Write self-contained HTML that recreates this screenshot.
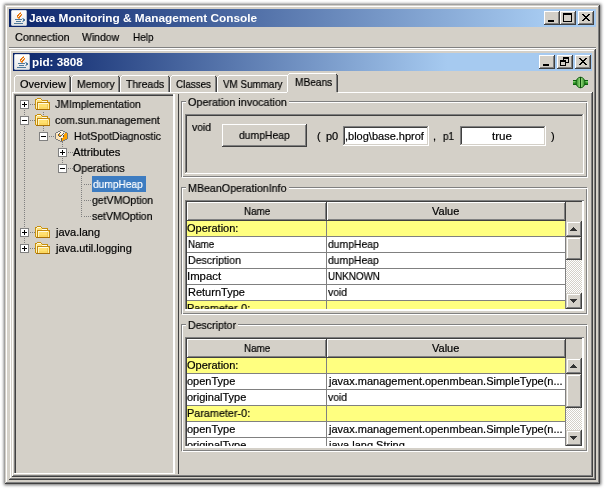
<!DOCTYPE html>
<html><head><meta charset="utf-8"><style>
html,body{margin:0;padding:0}
body{width:605px;height:489px;position:relative;overflow:hidden;background:#fff;font-family:"Liberation Sans",sans-serif;font-size:11px}
div,svg{position:absolute;box-sizing:border-box}
.t{white-space:pre;line-height:13px;color:#000;will-change:transform;-webkit-text-stroke:0.2px currentColor}
</style></head><body>
<div style="left:5px;top:5px;width:595px;height:479px;background:#d4d0c8;box-shadow:0 0 3px 1px rgba(0,0,0,0.6)"></div>
<div style="left:5px;top:5px;width:595px;height:479px;box-shadow:inset -1px -1px #404040,inset 1px 1px #d4d0c8,inset -2px -2px #808080,inset 2px 2px #ffffff;"></div>
<div style="left:9px;top:9px;width:587px;height:18px;background:linear-gradient(to right,#0a246a 0px,#a6caf0 535px);"></div>
<svg style="left:11px;top:10px" width="16" height="16" viewBox="0 0 16 16" shape-rendering="crispEdges">
<defs><linearGradient id="jg11" x1="0" y1="0" x2="0" y2="1"><stop offset="0" stop-color="#ffffff"/><stop offset="1" stop-color="#e6e6e6"/></linearGradient></defs>
<rect x="0" y="0" width="16" height="16" fill="#9aa8c0" opacity="0.6"/>
<rect x="1" y="0" width="14" height="16" fill="url(#jg11)"/>
<rect x="0" y="1" width="16" height="14" fill="url(#jg11)"/>
<rect x="0" y="1" width="1" height="14" fill="#c8d0dc"/><rect x="15" y="1" width="1" height="14" fill="#b8c2d0"/>
<rect x="1" y="0" width="14" height="1" fill="#d8dee6"/><rect x="1" y="15" width="14" height="1" fill="#b8c2d0"/>
<rect x="9" y="2" width="1" height="1" fill="#f4a860"/><rect x="8" y="3" width="1" height="1" fill="#e8760a"/><rect x="9" y="3" width="1" height="1" fill="#e8760a"/><rect x="7" y="4" width="1" height="1" fill="#e8760a"/><rect x="8" y="4" width="1" height="1" fill="#f4a860"/><rect x="10" y="4" width="1" height="1" fill="#e8760a"/><rect x="6" y="5" width="1" height="1" fill="#e8760a"/><rect x="7" y="5" width="1" height="1" fill="#e8760a"/><rect x="9" y="5" width="1" height="1" fill="#e8760a"/><rect x="10" y="5" width="1" height="1" fill="#f4a860"/><rect x="6" y="6" width="1" height="1" fill="#e8760a"/><rect x="8" y="6" width="1" height="1" fill="#e8760a"/><rect x="9" y="6" width="1" height="1" fill="#e8760a"/><rect x="6" y="7" width="1" height="1" fill="#f4a860"/><rect x="7" y="7" width="1" height="1" fill="#e8760a"/><rect x="8" y="7" width="1" height="1" fill="#e8760a"/><rect x="7" y="8" width="1" height="1" fill="#f4a860"/><rect x="8" y="8" width="1" height="1" fill="#f4a860"/><rect x="4" y="9" width="7" height="1" fill="#4f7a9c"/><rect x="11" y="8" width="2" height="1" fill="#8fb0c8"/><rect x="12" y="9" width="2" height="2" fill="#4f7a9c"/><rect x="11" y="11" width="2" height="1" fill="#8fb0c8"/><rect x="5" y="11" width="5" height="1" fill="#4f7a9c"/><rect x="3" y="13" width="9" height="1" fill="#4f7a9c"/>
</svg>
<div class="t" style="left:29.00px;top:12px;transform:scaleX(1.0758);transform-origin:0 0;font-weight:bold;-webkit-text-stroke:0;color:#fff">Java Monitoring &amp; Management Console</div>
<div style="left:544px;top:11px;width:16px;height:14px;background:#d4d0c8;box-shadow:inset -1px -1px #404040,inset 1px 1px #ffffff,inset -2px -2px #808080,inset 2px 2px #d4d0c8;"></div>
<div style="left:548px;top:20px;width:6px;height:2px;background:#000;"></div>
<div style="left:560px;top:11px;width:16px;height:14px;background:#d4d0c8;box-shadow:inset -1px -1px #404040,inset 1px 1px #ffffff,inset -2px -2px #808080,inset 2px 2px #d4d0c8;"></div>
<div style="left:563px;top:13px;width:9px;height:9px;background:transparent;box-shadow:inset 0 2px #000,inset 1px 0 #000,inset -1px 0 #000,inset 0 -1px #000"></div>
<div style="left:578px;top:11px;width:16px;height:14px;background:#d4d0c8;box-shadow:inset -1px -1px #404040,inset 1px 1px #ffffff,inset -2px -2px #808080,inset 2px 2px #d4d0c8;"></div>
<svg style="left:582px;top:14px" width="8" height="7" shape-rendering="crispEdges"><rect x="0" y="0" width="1" height="1"/><rect x="1" y="0" width="1" height="1"/><rect x="6" y="0" width="1" height="1"/><rect x="7" y="0" width="1" height="1"/><rect x="1" y="1" width="1" height="1"/><rect x="2" y="1" width="1" height="1"/><rect x="5" y="1" width="1" height="1"/><rect x="6" y="1" width="1" height="1"/><rect x="2" y="2" width="1" height="1"/><rect x="3" y="2" width="1" height="1"/><rect x="4" y="2" width="1" height="1"/><rect x="5" y="2" width="1" height="1"/><rect x="3" y="3" width="1" height="1"/><rect x="4" y="3" width="1" height="1"/><rect x="2" y="4" width="1" height="1"/><rect x="3" y="4" width="1" height="1"/><rect x="4" y="4" width="1" height="1"/><rect x="5" y="4" width="1" height="1"/><rect x="1" y="5" width="1" height="1"/><rect x="2" y="5" width="1" height="1"/><rect x="5" y="5" width="1" height="1"/><rect x="6" y="5" width="1" height="1"/><rect x="0" y="6" width="1" height="1"/><rect x="1" y="6" width="1" height="1"/><rect x="6" y="6" width="1" height="1"/><rect x="7" y="6" width="1" height="1"/></svg>
<div class="t" style="left:15.00px;top:31px;transform:scaleX(0.9815);transform-origin:0 0;">Connection</div>
<div class="t" style="left:82.00px;top:31px;transform:scaleX(0.9487);transform-origin:0 0;">Window</div>
<div class="t" style="left:133.00px;top:31px;transform:scaleX(0.9091);transform-origin:0 0;">Help</div>
<div style="left:9px;top:47px;width:587px;height:1px;background:#808080;"></div>
<div style="left:9px;top:48px;width:587px;height:1px;background:#ffffff;"></div>
<div style="left:9px;top:49px;width:587px;height:431px;box-shadow:inset -1px -1px #404040,inset 1px 1px #d4d0c8,inset -2px -2px #808080,inset 2px 2px #ffffff;"></div>
<div style="left:13px;top:53px;width:579px;height:18px;background:linear-gradient(to right,#0a246a 0px,#a6caf0 434px);"></div>
<svg style="left:14px;top:54px" width="16" height="16" viewBox="0 0 16 16" shape-rendering="crispEdges">
<defs><linearGradient id="jg14" x1="0" y1="0" x2="0" y2="1"><stop offset="0" stop-color="#ffffff"/><stop offset="1" stop-color="#e6e6e6"/></linearGradient></defs>
<rect x="0" y="0" width="16" height="16" fill="#9aa8c0" opacity="0.6"/>
<rect x="1" y="0" width="14" height="16" fill="url(#jg14)"/>
<rect x="0" y="1" width="16" height="14" fill="url(#jg14)"/>
<rect x="0" y="1" width="1" height="14" fill="#c8d0dc"/><rect x="15" y="1" width="1" height="14" fill="#b8c2d0"/>
<rect x="1" y="0" width="14" height="1" fill="#d8dee6"/><rect x="1" y="15" width="14" height="1" fill="#b8c2d0"/>
<rect x="9" y="2" width="1" height="1" fill="#f4a860"/><rect x="8" y="3" width="1" height="1" fill="#e8760a"/><rect x="9" y="3" width="1" height="1" fill="#e8760a"/><rect x="7" y="4" width="1" height="1" fill="#e8760a"/><rect x="8" y="4" width="1" height="1" fill="#f4a860"/><rect x="10" y="4" width="1" height="1" fill="#e8760a"/><rect x="6" y="5" width="1" height="1" fill="#e8760a"/><rect x="7" y="5" width="1" height="1" fill="#e8760a"/><rect x="9" y="5" width="1" height="1" fill="#e8760a"/><rect x="10" y="5" width="1" height="1" fill="#f4a860"/><rect x="6" y="6" width="1" height="1" fill="#e8760a"/><rect x="8" y="6" width="1" height="1" fill="#e8760a"/><rect x="9" y="6" width="1" height="1" fill="#e8760a"/><rect x="6" y="7" width="1" height="1" fill="#f4a860"/><rect x="7" y="7" width="1" height="1" fill="#e8760a"/><rect x="8" y="7" width="1" height="1" fill="#e8760a"/><rect x="7" y="8" width="1" height="1" fill="#f4a860"/><rect x="8" y="8" width="1" height="1" fill="#f4a860"/><rect x="4" y="9" width="7" height="1" fill="#4f7a9c"/><rect x="11" y="8" width="2" height="1" fill="#8fb0c8"/><rect x="12" y="9" width="2" height="2" fill="#4f7a9c"/><rect x="11" y="11" width="2" height="1" fill="#8fb0c8"/><rect x="5" y="11" width="5" height="1" fill="#4f7a9c"/><rect x="3" y="13" width="9" height="1" fill="#4f7a9c"/>
</svg>
<div class="t" style="left:32.00px;top:56px;transform:scaleX(1.0638);transform-origin:0 0;font-weight:bold;-webkit-text-stroke:0;color:#fff">pid: 3808</div>
<div style="left:539px;top:55px;width:16px;height:14px;background:#d4d0c8;box-shadow:inset -1px -1px #404040,inset 1px 1px #ffffff,inset -2px -2px #808080,inset 2px 2px #d4d0c8;"></div>
<div style="left:543px;top:64px;width:6px;height:2px;background:#000;"></div>
<div style="left:557px;top:55px;width:16px;height:14px;background:#d4d0c8;box-shadow:inset -1px -1px #404040,inset 1px 1px #ffffff,inset -2px -2px #808080,inset 2px 2px #d4d0c8;"></div>
<div style="left:563px;top:57px;width:6px;height:6px;background:transparent;box-shadow:inset 0 2px #000,inset 1px 0 #000,inset -1px 0 #000,inset 0 -1px #000"></div>
<div style="left:560px;top:60px;width:6px;height:6px;background:#d4d0c8;box-shadow:inset 0 2px #000,inset 1px 0 #000,inset -1px 0 #000,inset 0 -1px #000"></div>
<div style="left:575px;top:55px;width:16px;height:14px;background:#d4d0c8;box-shadow:inset -1px -1px #404040,inset 1px 1px #ffffff,inset -2px -2px #808080,inset 2px 2px #d4d0c8;"></div>
<svg style="left:579px;top:58px" width="8" height="7" shape-rendering="crispEdges"><rect x="0" y="0" width="1" height="1"/><rect x="1" y="0" width="1" height="1"/><rect x="6" y="0" width="1" height="1"/><rect x="7" y="0" width="1" height="1"/><rect x="1" y="1" width="1" height="1"/><rect x="2" y="1" width="1" height="1"/><rect x="5" y="1" width="1" height="1"/><rect x="6" y="1" width="1" height="1"/><rect x="2" y="2" width="1" height="1"/><rect x="3" y="2" width="1" height="1"/><rect x="4" y="2" width="1" height="1"/><rect x="5" y="2" width="1" height="1"/><rect x="3" y="3" width="1" height="1"/><rect x="4" y="3" width="1" height="1"/><rect x="2" y="4" width="1" height="1"/><rect x="3" y="4" width="1" height="1"/><rect x="4" y="4" width="1" height="1"/><rect x="5" y="4" width="1" height="1"/><rect x="1" y="5" width="1" height="1"/><rect x="2" y="5" width="1" height="1"/><rect x="5" y="5" width="1" height="1"/><rect x="6" y="5" width="1" height="1"/><rect x="0" y="6" width="1" height="1"/><rect x="1" y="6" width="1" height="1"/><rect x="6" y="6" width="1" height="1"/><rect x="7" y="6" width="1" height="1"/></svg>
<svg style="left:572px;top:75px" width="18" height="15" viewBox="0 0 18 15">
<defs><linearGradient id="pl" x1="0" y1="0" x2="1" y2="0"><stop offset="0" stop-color="#2a8a22"/><stop offset="0.4" stop-color="#88d070"/><stop offset="0.5" stop-color="#1a6a14"/><stop offset="0.6" stop-color="#88d070"/><stop offset="1" stop-color="#2a8a22"/></linearGradient></defs>
<rect x="1" y="5" width="15" height="5" fill="#0c6010"/>
<rect x="1" y="6" width="15" height="1" fill="#78cc68"/>
<rect x="1" y="7" width="15" height="1" fill="#4aa83c"/>
<rect x="1" y="8" width="15" height="1" fill="#2c8a20"/>
<ellipse cx="8.5" cy="7.5" rx="4.5" ry="5.3" fill="url(#pl)" stroke="#0c5a0c" stroke-width="0.9"/>
<rect x="8" y="2" width="1" height="11" fill="#0a4a0a"/>
</svg>
<div style="left:12px;top:92px;width:581px;height:385px;background:#d4d0c8;box-shadow:inset -1px -1px #404040, inset 1px 1px #fff, inset -2px -2px #808080"></div>
<div style="left:14px;top:77px;width:1px;height:15px;background:#ffffff;"></div>
<div style="left:15px;top:76px;width:1px;height:1px;background:#ffffff;"></div>
<div style="left:16px;top:75px;width:53px;height:1px;background:#ffffff;"></div>
<div style="left:69px;top:77px;width:1px;height:15px;background:#808080;"></div>
<div style="left:70px;top:77px;width:1px;height:15px;background:#404040;"></div>
<div style="left:69px;top:76px;width:1px;height:1px;background:#404040;"></div>
<div class="t" style="left:20.00px;top:78px;">Overview</div>
<div style="left:71px;top:77px;width:1px;height:15px;background:#ffffff;"></div>
<div style="left:72px;top:76px;width:1px;height:1px;background:#ffffff;"></div>
<div style="left:73px;top:75px;width:45px;height:1px;background:#ffffff;"></div>
<div style="left:118px;top:77px;width:1px;height:15px;background:#808080;"></div>
<div style="left:119px;top:77px;width:1px;height:15px;background:#404040;"></div>
<div style="left:118px;top:76px;width:1px;height:1px;background:#404040;"></div>
<div class="t" style="left:77.00px;top:78px;transform:scaleX(0.9487);transform-origin:0 0;">Memory</div>
<div style="left:120px;top:77px;width:1px;height:15px;background:#ffffff;"></div>
<div style="left:121px;top:76px;width:1px;height:1px;background:#ffffff;"></div>
<div style="left:122px;top:75px;width:46px;height:1px;background:#ffffff;"></div>
<div style="left:168px;top:77px;width:1px;height:15px;background:#808080;"></div>
<div style="left:169px;top:77px;width:1px;height:15px;background:#404040;"></div>
<div style="left:168px;top:76px;width:1px;height:1px;background:#404040;"></div>
<div class="t" style="left:126.00px;top:78px;transform:scaleX(0.9487);transform-origin:0 0;">Threads</div>
<div style="left:170px;top:77px;width:1px;height:15px;background:#ffffff;"></div>
<div style="left:171px;top:76px;width:1px;height:1px;background:#ffffff;"></div>
<div style="left:172px;top:75px;width:43px;height:1px;background:#ffffff;"></div>
<div style="left:215px;top:77px;width:1px;height:15px;background:#808080;"></div>
<div style="left:216px;top:77px;width:1px;height:15px;background:#404040;"></div>
<div style="left:215px;top:76px;width:1px;height:1px;background:#404040;"></div>
<div class="t" style="left:176.00px;top:78px;transform:scaleX(0.8947);transform-origin:0 0;">Classes</div>
<div style="left:217px;top:77px;width:1px;height:15px;background:#ffffff;"></div>
<div style="left:218px;top:76px;width:1px;height:1px;background:#ffffff;"></div>
<div style="left:219px;top:75px;width:68px;height:1px;background:#ffffff;"></div>
<div style="left:287px;top:77px;width:1px;height:15px;background:#808080;"></div>
<div style="left:288px;top:77px;width:1px;height:15px;background:#404040;"></div>
<div style="left:287px;top:76px;width:1px;height:1px;background:#404040;"></div>
<div class="t" style="left:223.00px;top:78px;transform:scaleX(0.8939);transform-origin:0 0;">VM Summary</div>
<div style="left:287px;top:73px;width:51px;height:20px;background:#d4d0c8;"></div>
<div style="left:287px;top:75px;width:1px;height:17px;background:#ffffff;"></div>
<div style="left:288px;top:74px;width:1px;height:1px;background:#ffffff;"></div>
<div style="left:289px;top:73px;width:47px;height:1px;background:#ffffff;"></div>
<div style="left:336px;top:75px;width:1px;height:17px;background:#808080;"></div>
<div style="left:337px;top:75px;width:1px;height:17px;background:#404040;"></div>
<div style="left:336px;top:74px;width:1px;height:1px;background:#404040;"></div>
<div class="t" style="left:295.00px;top:76px;transform:scaleX(0.9231);transform-origin:0 0;">MBeans</div>
<div style="left:14px;top:94px;width:161px;height:380px;background:#d4d0c8;box-shadow:inset 1px 1px #808080, inset 2px 2px #404040"></div>
<div style="left:173px;top:94px;width:2px;height:380px;background:#ffffff;"></div>
<div style="left:14px;top:473px;width:161px;height:1px;background:#ffffff;"></div>
<div style="left:178px;top:94px;width:1px;height:380px;background:#404040;"></div>
<div style="left:24px;top:110px;width:1px;height:135px;background:repeating-linear-gradient(to bottom,#808080 0 1px,transparent 1px 2px);"></div>
<div style="left:43px;top:112px;width:1px;height:21px;background:repeating-linear-gradient(to bottom,#808080 0 1px,transparent 1px 2px);"></div>
<div style="left:62px;top:142px;width:1px;height:23px;background:repeating-linear-gradient(to bottom,#808080 0 1px,transparent 1px 2px);"></div>
<div style="left:81px;top:176px;width:1px;height:41px;background:repeating-linear-gradient(to bottom,#808080 0 1px,transparent 1px 2px);"></div>
<div style="left:20px;top:100px;width:9px;height:9px;background:#ffffff;box-shadow:inset 0 0 0 1px #808080"></div>
<div style="left:22px;top:104px;width:5px;height:1px;background:#000;"></div>
<div style="left:24px;top:102px;width:1px;height:5px;background:#000;"></div>
<div style="left:30px;top:104px;width:5px;height:1px;background:repeating-linear-gradient(to right,#808080 0 1px,transparent 1px 2px);"></div>
<svg style="left:34px;top:97px" width="16" height="14" viewBox="0 0 16 14" shape-rendering="crispEdges">
<rect x="3" y="1" width="4" height="1" fill="#c8900c"/>
<rect x="1" y="2" width="1" height="10" fill="#c8900c"/>
<rect x="2" y="2" width="1" height="1" fill="#c8900c"/>
<rect x="7" y="2" width="1" height="1" fill="#c8900c"/>
<rect x="8" y="3" width="6" height="1" fill="#c8900c"/>
<rect x="13" y="4" width="1" height="1" fill="#c8900c"/>
<rect x="2" y="3" width="6" height="9" fill="#fde07a"/>
<rect x="8" y="4" width="5" height="8" fill="#fde07a"/>
<rect x="3" y="2" width="4" height="1" fill="#fffbe8"/>
<rect x="2" y="3" width="1" height="8" fill="#fff4c0"/>
<rect x="8" y="4" width="5" height="1" fill="#fffbe8"/>
<rect x="3" y="5" width="13" height="8" fill="#c48a10"/>
<rect x="4" y="6" width="11" height="6" fill="#ffe070"/>
<rect x="4" y="6" width="10" height="1" fill="#fffbe0"/>
<rect x="4" y="7" width="1" height="5" fill="#fff6c0"/>
<rect x="5" y="10" width="8" height="2" fill="#fcd860"/>
<rect x="13" y="7" width="1" height="5" fill="#f0c850"/>
<rect x="14" y="7" width="1" height="5" fill="#fff0a8"/>
<rect x="2" y="12" width="14" height="1" fill="#a87008"/>
</svg>
<div class="t" style="left:55.00px;top:98px;transform:scaleX(0.9551);transform-origin:0 0;">JMImplementation</div>
<div style="left:20px;top:116px;width:9px;height:9px;background:#ffffff;box-shadow:inset 0 0 0 1px #808080"></div>
<div style="left:22px;top:120px;width:5px;height:1px;background:#000;"></div>
<div style="left:30px;top:120px;width:5px;height:1px;background:repeating-linear-gradient(to right,#808080 0 1px,transparent 1px 2px);"></div>
<svg style="left:34px;top:113px" width="16" height="14" viewBox="0 0 16 14" shape-rendering="crispEdges">
<rect x="3" y="1" width="4" height="1" fill="#c8900c"/>
<rect x="1" y="2" width="1" height="10" fill="#c8900c"/>
<rect x="2" y="2" width="1" height="1" fill="#c8900c"/>
<rect x="7" y="2" width="1" height="1" fill="#c8900c"/>
<rect x="8" y="3" width="6" height="1" fill="#c8900c"/>
<rect x="13" y="4" width="1" height="1" fill="#c8900c"/>
<rect x="2" y="3" width="6" height="9" fill="#fde07a"/>
<rect x="8" y="4" width="5" height="8" fill="#fde07a"/>
<rect x="3" y="2" width="4" height="1" fill="#fffbe8"/>
<rect x="2" y="3" width="1" height="8" fill="#fff4c0"/>
<rect x="8" y="4" width="5" height="1" fill="#fffbe8"/>
<rect x="3" y="5" width="13" height="8" fill="#c48a10"/>
<rect x="4" y="6" width="11" height="6" fill="#ffe070"/>
<rect x="4" y="6" width="10" height="1" fill="#fffbe0"/>
<rect x="4" y="7" width="1" height="5" fill="#fff6c0"/>
<rect x="5" y="10" width="8" height="2" fill="#fcd860"/>
<rect x="13" y="7" width="1" height="5" fill="#f0c850"/>
<rect x="14" y="7" width="1" height="5" fill="#fff0a8"/>
<rect x="2" y="12" width="14" height="1" fill="#a87008"/>
</svg>
<div class="t" style="left:55.00px;top:114px;transform:scaleX(0.9630);transform-origin:0 0;">com.sun.management</div>
<div style="left:39px;top:132px;width:9px;height:9px;background:#ffffff;box-shadow:inset 0 0 0 1px #808080"></div>
<div style="left:41px;top:136px;width:5px;height:1px;background:#000;"></div>
<div style="left:49px;top:136px;width:5px;height:1px;background:repeating-linear-gradient(to right,#808080 0 1px,transparent 1px 2px);"></div>
<svg style="left:53px;top:128px" width="16" height="16" shape-rendering="crispEdges"><rect x="7" y="2" width="1" height="1" fill="#7c7c7c"/><rect x="8" y="2" width="1" height="1" fill="#7c7c7c"/><rect x="9" y="2" width="1" height="1" fill="#7c7c7c"/><rect x="5" y="3" width="1" height="1" fill="#7c7c7c"/><rect x="6" y="3" width="1" height="1" fill="#7c7c7c"/><rect x="7" y="3" width="1" height="1" fill="#fff6e6"/><rect x="8" y="3" width="1" height="1" fill="#fff6e6"/><rect x="9" y="3" width="1" height="1" fill="#fff6e6"/><rect x="10" y="3" width="1" height="1" fill="#7c7c7c"/><rect x="11" y="3" width="1" height="1" fill="#7c7c7c"/><rect x="3" y="4" width="1" height="1" fill="#7c7c7c"/><rect x="4" y="4" width="1" height="1" fill="#7c7c7c"/><rect x="5" y="4" width="1" height="1" fill="#fff6e6"/><rect x="6" y="4" width="1" height="1" fill="#fff6e6"/><rect x="7" y="4" width="1" height="1" fill="#5a5a5a"/><rect x="8" y="4" width="1" height="1" fill="#fff6e6"/><rect x="9" y="4" width="1" height="1" fill="#fff6e6"/><rect x="10" y="4" width="1" height="1" fill="#e0dcd4"/><rect x="11" y="4" width="1" height="1" fill="#e0dcd4"/><rect x="12" y="4" width="1" height="1" fill="#7c7c7c"/><rect x="13" y="4" width="1" height="1" fill="#7c7c7c"/><rect x="2" y="5" width="1" height="1" fill="#7c7c7c"/><rect x="3" y="5" width="1" height="1" fill="#ffe4b4"/><rect x="4" y="5" width="1" height="1" fill="#fff6e6"/><rect x="5" y="5" width="1" height="1" fill="#fff6e6"/><rect x="6" y="5" width="1" height="1" fill="#5a5a5a"/><rect x="7" y="5" width="1" height="1" fill="#fff6e6"/><rect x="8" y="5" width="1" height="1" fill="#fff6e6"/><rect x="9" y="5" width="1" height="1" fill="#fff6e6"/><rect x="10" y="5" width="1" height="1" fill="#5a5a5a"/><rect x="11" y="5" width="1" height="1" fill="#e0dcd4"/><rect x="12" y="5" width="1" height="1" fill="#ffa200"/><rect x="13" y="5" width="1" height="1" fill="#ffa200"/><rect x="14" y="5" width="1" height="1" fill="#7c7c7c"/><rect x="2" y="6" width="1" height="1" fill="#7c7c7c"/><rect x="3" y="6" width="1" height="1" fill="#ffe4b4"/><rect x="4" y="6" width="1" height="1" fill="#ffe4b4"/><rect x="5" y="6" width="1" height="1" fill="#5a5a5a"/><rect x="6" y="6" width="1" height="1" fill="#ffa200"/><rect x="7" y="6" width="1" height="1" fill="#fff6e6"/><rect x="8" y="6" width="1" height="1" fill="#fff6e6"/><rect x="9" y="6" width="1" height="1" fill="#5a5a5a"/><rect x="10" y="6" width="1" height="1" fill="#fff6e6"/><rect x="11" y="6" width="1" height="1" fill="#ffa200"/><rect x="12" y="6" width="1" height="1" fill="#ffa200"/><rect x="13" y="6" width="1" height="1" fill="#ffa200"/><rect x="14" y="6" width="1" height="1" fill="#7c7c7c"/><rect x="2" y="7" width="1" height="1" fill="#7c7c7c"/><rect x="3" y="7" width="1" height="1" fill="#ffe4b4"/><rect x="4" y="7" width="1" height="1" fill="#ffe4b4"/><rect x="5" y="7" width="1" height="1" fill="#5a5a5a"/><rect x="6" y="7" width="1" height="1" fill="#ffa200"/><rect x="7" y="7" width="1" height="1" fill="#ffa200"/><rect x="8" y="7" width="1" height="1" fill="#5a5a5a"/><rect x="9" y="7" width="1" height="1" fill="#fff6e6"/><rect x="10" y="7" width="1" height="1" fill="#5a5a5a"/><rect x="11" y="7" width="1" height="1" fill="#ffa200"/><rect x="12" y="7" width="1" height="1" fill="#ffa200"/><rect x="13" y="7" width="1" height="1" fill="#ffa200"/><rect x="14" y="7" width="1" height="1" fill="#7c7c7c"/><rect x="2" y="8" width="1" height="1" fill="#7c7c7c"/><rect x="3" y="8" width="1" height="1" fill="#ffe4b4"/><rect x="4" y="8" width="1" height="1" fill="#ffe4b4"/><rect x="5" y="8" width="1" height="1" fill="#ffe4b4"/><rect x="6" y="8" width="1" height="1" fill="#5a5a5a"/><rect x="7" y="8" width="1" height="1" fill="#5a5a5a"/><rect x="8" y="8" width="1" height="1" fill="#fff6e6"/><rect x="9" y="8" width="1" height="1" fill="#fff6e6"/><rect x="10" y="8" width="1" height="1" fill="#5a5a5a"/><rect x="11" y="8" width="1" height="1" fill="#ffa200"/><rect x="12" y="8" width="1" height="1" fill="#ffa200"/><rect x="13" y="8" width="1" height="1" fill="#ffa200"/><rect x="14" y="8" width="1" height="1" fill="#7c7c7c"/><rect x="2" y="9" width="1" height="1" fill="#7c7c7c"/><rect x="3" y="9" width="1" height="1" fill="#ffe4b4"/><rect x="4" y="9" width="1" height="1" fill="#ffe4b4"/><rect x="5" y="9" width="1" height="1" fill="#ffe4b4"/><rect x="6" y="9" width="1" height="1" fill="#fff6e6"/><rect x="7" y="9" width="1" height="1" fill="#fff6e6"/><rect x="8" y="9" width="1" height="1" fill="#fff6e6"/><rect x="9" y="9" width="1" height="1" fill="#fff6e6"/><rect x="10" y="9" width="1" height="1" fill="#ffa200"/><rect x="11" y="9" width="1" height="1" fill="#ffa200"/><rect x="12" y="9" width="1" height="1" fill="#ffa200"/><rect x="13" y="9" width="1" height="1" fill="#ffa200"/><rect x="14" y="9" width="1" height="1" fill="#7c7c7c"/><rect x="2" y="10" width="1" height="1" fill="#7c7c7c"/><rect x="3" y="10" width="1" height="1" fill="#ffe4b4"/><rect x="4" y="10" width="1" height="1" fill="#ffe4b4"/><rect x="5" y="10" width="1" height="1" fill="#ffe4b4"/><rect x="6" y="10" width="1" height="1" fill="#ffe4b4"/><rect x="7" y="10" width="1" height="1" fill="#ffe4b4"/><rect x="8" y="10" width="1" height="1" fill="#5a5a5a"/><rect x="9" y="10" width="1" height="1" fill="#ffa200"/><rect x="10" y="10" width="1" height="1" fill="#ffa200"/><rect x="11" y="10" width="1" height="1" fill="#ffa200"/><rect x="12" y="10" width="1" height="1" fill="#ffa200"/><rect x="13" y="10" width="1" height="1" fill="#ffa200"/><rect x="14" y="10" width="1" height="1" fill="#7c7c7c"/><rect x="3" y="11" width="1" height="1" fill="#7c7c7c"/><rect x="4" y="11" width="1" height="1" fill="#7c7c7c"/><rect x="5" y="11" width="1" height="1" fill="#ffe4b4"/><rect x="6" y="11" width="1" height="1" fill="#ffe4b4"/><rect x="7" y="11" width="1" height="1" fill="#ffe4b4"/><rect x="8" y="11" width="1" height="1" fill="#5a5a5a"/><rect x="9" y="11" width="1" height="1" fill="#ffa200"/><rect x="10" y="11" width="1" height="1" fill="#ffa200"/><rect x="11" y="11" width="1" height="1" fill="#ffa200"/><rect x="12" y="11" width="1" height="1" fill="#7c7c7c"/><rect x="13" y="11" width="1" height="1" fill="#7c7c7c"/><rect x="5" y="12" width="1" height="1" fill="#7c7c7c"/><rect x="6" y="12" width="1" height="1" fill="#7c7c7c"/><rect x="7" y="12" width="1" height="1" fill="#ffe4b4"/><rect x="8" y="12" width="1" height="1" fill="#5a5a5a"/><rect x="9" y="12" width="1" height="1" fill="#ffa200"/><rect x="10" y="12" width="1" height="1" fill="#7c7c7c"/><rect x="11" y="12" width="1" height="1" fill="#7c7c7c"/><rect x="7" y="13" width="1" height="1" fill="#7c7c7c"/><rect x="8" y="13" width="1" height="1" fill="#7c7c7c"/><rect x="9" y="13" width="1" height="1" fill="#7c7c7c"/></svg>
<div class="t" style="left:74.00px;top:130px;transform:scaleX(0.9556);transform-origin:0 0;">HotSpotDiagnostic</div>
<div style="left:58px;top:148px;width:9px;height:9px;background:#ffffff;box-shadow:inset 0 0 0 1px #808080"></div>
<div style="left:60px;top:152px;width:5px;height:1px;background:#000;"></div>
<div style="left:62px;top:150px;width:1px;height:5px;background:#000;"></div>
<div style="left:68px;top:152px;width:5px;height:1px;background:repeating-linear-gradient(to right,#808080 0 1px,transparent 1px 2px);"></div>
<div class="t" style="left:73.00px;top:146px;transform:scaleX(1.0222);transform-origin:0 0;">Attributes</div>
<div style="left:58px;top:164px;width:9px;height:9px;background:#ffffff;box-shadow:inset 0 0 0 1px #808080"></div>
<div style="left:60px;top:168px;width:5px;height:1px;background:#000;"></div>
<div style="left:68px;top:168px;width:5px;height:1px;background:repeating-linear-gradient(to right,#808080 0 1px,transparent 1px 2px);"></div>
<div class="t" style="left:73.00px;top:162px;transform:scaleX(0.9623);transform-origin:0 0;">Operations</div>
<div style="left:84px;top:184px;width:7px;height:1px;background:repeating-linear-gradient(to right,#808080 0 1px,transparent 1px 2px);"></div>
<div style="left:92px;top:176px;width:54px;height:16px;background:#3d7cc1;"></div>
<div class="t" style="left:93.00px;top:178px;transform:scaleX(0.9245);transform-origin:0 0;color:#fff">dumpHeap</div>
<div style="left:84px;top:200px;width:7px;height:1px;background:repeating-linear-gradient(to right,#808080 0 1px,transparent 1px 2px);"></div>
<div class="t" style="left:92.00px;top:194px;transform:scaleX(0.9524);transform-origin:0 0;">getVMOption</div>
<div style="left:84px;top:216px;width:7px;height:1px;background:repeating-linear-gradient(to right,#808080 0 1px,transparent 1px 2px);"></div>
<div class="t" style="left:92.00px;top:210px;transform:scaleX(0.9516);transform-origin:0 0;">setVMOption</div>
<div style="left:20px;top:228px;width:9px;height:9px;background:#ffffff;box-shadow:inset 0 0 0 1px #808080"></div>
<div style="left:22px;top:232px;width:5px;height:1px;background:#000;"></div>
<div style="left:24px;top:230px;width:1px;height:5px;background:#000;"></div>
<div style="left:30px;top:232px;width:5px;height:1px;background:repeating-linear-gradient(to right,#808080 0 1px,transparent 1px 2px);"></div>
<svg style="left:34px;top:225px" width="16" height="14" viewBox="0 0 16 14" shape-rendering="crispEdges">
<rect x="3" y="1" width="4" height="1" fill="#c8900c"/>
<rect x="1" y="2" width="1" height="10" fill="#c8900c"/>
<rect x="2" y="2" width="1" height="1" fill="#c8900c"/>
<rect x="7" y="2" width="1" height="1" fill="#c8900c"/>
<rect x="8" y="3" width="6" height="1" fill="#c8900c"/>
<rect x="13" y="4" width="1" height="1" fill="#c8900c"/>
<rect x="2" y="3" width="6" height="9" fill="#fde07a"/>
<rect x="8" y="4" width="5" height="8" fill="#fde07a"/>
<rect x="3" y="2" width="4" height="1" fill="#fffbe8"/>
<rect x="2" y="3" width="1" height="8" fill="#fff4c0"/>
<rect x="8" y="4" width="5" height="1" fill="#fffbe8"/>
<rect x="3" y="5" width="13" height="8" fill="#c48a10"/>
<rect x="4" y="6" width="11" height="6" fill="#ffe070"/>
<rect x="4" y="6" width="10" height="1" fill="#fffbe0"/>
<rect x="4" y="7" width="1" height="5" fill="#fff6c0"/>
<rect x="5" y="10" width="8" height="2" fill="#fcd860"/>
<rect x="13" y="7" width="1" height="5" fill="#f0c850"/>
<rect x="14" y="7" width="1" height="5" fill="#fff0a8"/>
<rect x="2" y="12" width="14" height="1" fill="#a87008"/>
</svg>
<div class="t" style="left:56.00px;top:226px;">java.lang</div>
<div style="left:20px;top:244px;width:9px;height:9px;background:#ffffff;box-shadow:inset 0 0 0 1px #808080"></div>
<div style="left:22px;top:248px;width:5px;height:1px;background:#000;"></div>
<div style="left:24px;top:246px;width:1px;height:5px;background:#000;"></div>
<div style="left:30px;top:248px;width:5px;height:1px;background:repeating-linear-gradient(to right,#808080 0 1px,transparent 1px 2px);"></div>
<svg style="left:34px;top:241px" width="16" height="14" viewBox="0 0 16 14" shape-rendering="crispEdges">
<rect x="3" y="1" width="4" height="1" fill="#c8900c"/>
<rect x="1" y="2" width="1" height="10" fill="#c8900c"/>
<rect x="2" y="2" width="1" height="1" fill="#c8900c"/>
<rect x="7" y="2" width="1" height="1" fill="#c8900c"/>
<rect x="8" y="3" width="6" height="1" fill="#c8900c"/>
<rect x="13" y="4" width="1" height="1" fill="#c8900c"/>
<rect x="2" y="3" width="6" height="9" fill="#fde07a"/>
<rect x="8" y="4" width="5" height="8" fill="#fde07a"/>
<rect x="3" y="2" width="4" height="1" fill="#fffbe8"/>
<rect x="2" y="3" width="1" height="8" fill="#fff4c0"/>
<rect x="8" y="4" width="5" height="1" fill="#fffbe8"/>
<rect x="3" y="5" width="13" height="8" fill="#c48a10"/>
<rect x="4" y="6" width="11" height="6" fill="#ffe070"/>
<rect x="4" y="6" width="10" height="1" fill="#fffbe0"/>
<rect x="4" y="7" width="1" height="5" fill="#fff6c0"/>
<rect x="5" y="10" width="8" height="2" fill="#fcd860"/>
<rect x="13" y="7" width="1" height="5" fill="#f0c850"/>
<rect x="14" y="7" width="1" height="5" fill="#fff0a8"/>
<rect x="2" y="12" width="14" height="1" fill="#a87008"/>
</svg>
<div class="t" style="left:56.00px;top:242px;">java.util.logging</div>
<div style="left:181px;top:101px;width:406px;height:76px;background:transparent;box-shadow:inset 0 0 0 1px #808080"></div>
<div style="left:182px;top:102px;width:406px;height:76px;background:transparent;box-shadow:inset 0 0 0 1px #fff"></div>
<div style="left:186px;top:96px;width:103px;height:9px;background:#d4d0c8;"></div>
<div class="t" style="left:188.00px;top:96px;transform:scaleX(0.9800);transform-origin:0 0;">Operation invocation</div>
<div style="left:181px;top:187px;width:406px;height:127px;background:transparent;box-shadow:inset 0 0 0 1px #808080"></div>
<div style="left:182px;top:188px;width:406px;height:127px;background:transparent;box-shadow:inset 0 0 0 1px #fff"></div>
<div style="left:186px;top:182px;width:103px;height:9px;background:#d4d0c8;"></div>
<div class="t" style="left:188.00px;top:182px;transform:scaleX(0.9703);transform-origin:0 0;">MBeanOperationInfo</div>
<div style="left:181px;top:324px;width:406px;height:127px;background:transparent;box-shadow:inset 0 0 0 1px #808080"></div>
<div style="left:182px;top:325px;width:406px;height:127px;background:transparent;box-shadow:inset 0 0 0 1px #fff"></div>
<div style="left:186px;top:319px;width:52px;height:9px;background:#d4d0c8;"></div>
<div class="t" style="left:188.00px;top:319px;transform:scaleX(0.9592);transform-origin:0 0;">Descriptor</div>
<div style="left:185px;top:114px;width:399px;height:60px;background:#d4d0c8;box-shadow:inset -1px -1px #fff, inset 1px 1px #808080, inset -2px -2px #d4d0c8, inset 2px 2px #404040"></div>
<div class="t" style="left:192.00px;top:121px;transform:scaleX(0.9474);transform-origin:0 0;">void</div>
<div style="left:222px;top:124px;width:85px;height:23px;background:#d4d0c8;box-shadow:inset -1px -1px #404040,inset 1px 1px #ffffff,inset -2px -2px #808080,inset 2px 2px #d4d0c8;"></div>
<div class="t" style="left:239.00px;top:129px;transform:scaleX(0.9434);transform-origin:0 0;">dumpHeap</div>
<div class="t" style="left:317.00px;top:130px;">(</div>
<div class="t" style="left:326.00px;top:130px;">p0</div>
<div style="left:343px;top:126px;width:86px;height:20px;background:#ffffff;box-shadow:inset -1px -1px #fff, inset 1px 1px #808080, inset -2px -2px #d4d0c8, inset 2px 2px #404040"></div>
<div style="left:345px;top:128px;width:82px;height:16px;overflow:hidden">
<div class="t" style="left:0.00px;top:2px;">,blog\base.hprof</div>
</div>
<div class="t" style="left:433.00px;top:130px;">,</div>
<div class="t" style="left:443.00px;top:130px;transform:scaleX(0.9091);transform-origin:0 0;">p1</div>
<div style="left:460px;top:126px;width:86px;height:20px;background:#ffffff;box-shadow:inset -1px -1px #fff, inset 1px 1px #808080, inset -2px -2px #d4d0c8, inset 2px 2px #404040"></div>
<div class="t" style="left:492.00px;top:130px;transform:scaleX(1.0556);transform-origin:0 0;">true</div>
<div class="t" style="left:551.00px;top:130px;">)</div>
<div style="left:185px;top:200px;width:399px;height:111px;background:#fff;box-shadow:inset 1px 1px #808080, inset 2px 2px #404040"></div>
<div style="left:582px;top:200px;width:2px;height:111px;background:#ffffff;"></div>
<div style="left:185px;top:309px;width:399px;height:2px;background:#ffffff;"></div>
<div style="left:582px;top:200px;width:2px;height:1px;background:#808080;"></div>
<div style="left:187px;top:202px;width:140px;height:19px;background:#d4d0c8;box-shadow:inset -1px -1px #404040, inset 1px 1px #fff, inset -2px -2px #808080"></div>
<div style="left:327px;top:202px;width:239px;height:19px;background:#d4d0c8;box-shadow:inset -1px -1px #404040, inset 1px 1px #fff, inset -2px -2px #808080"></div>
<div style="left:566px;top:202px;width:16px;height:19px;background:#d4d0c8;"></div>
<div class="t" style="left:244.00px;top:205px;transform:scaleX(0.8929);transform-origin:0 0;">Name</div>
<div class="t" style="left:432.00px;top:205px;">Value</div>
<div style="left:187px;top:221px;width:379px;height:88px;overflow:hidden">
<div style="left:0;top:0px;width:378px;height:15px;background:#ffff80"></div>
<div style="left:0;top:15px;width:379px;height:1px;background:#808080"></div>
<div class="t" style="left:0.00px;top:1px;">Operation:</div>
<div style="left:0;top:16px;width:378px;height:15px;background:#fff"></div>
<div style="left:0;top:31px;width:379px;height:1px;background:#808080"></div>
<div class="t" style="left:1.00px;top:17px;transform:scaleX(0.8929);transform-origin:0 0;">Name</div>
<div class="t" style="left:141.00px;top:17px;transform:scaleX(0.9434);transform-origin:0 0;">dumpHeap</div>
<div style="left:0;top:32px;width:378px;height:15px;background:#fff"></div>
<div style="left:0;top:47px;width:379px;height:1px;background:#808080"></div>
<div class="t" style="left:1.00px;top:33px;transform:scaleX(0.9630);transform-origin:0 0;">Description</div>
<div class="t" style="left:141.00px;top:33px;transform:scaleX(0.9434);transform-origin:0 0;">dumpHeap</div>
<div style="left:0;top:48px;width:378px;height:15px;background:#fff"></div>
<div style="left:0;top:63px;width:379px;height:1px;background:#808080"></div>
<div class="t" style="left:-0.03px;top:49px;transform:scaleX(1.0323);transform-origin:0 0;">Impact</div>
<div class="t" style="left:141.00px;top:49px;transform:scaleX(0.8929);transform-origin:0 0;">UNKNOWN</div>
<div style="left:0;top:64px;width:378px;height:15px;background:#fff"></div>
<div style="left:0;top:79px;width:379px;height:1px;background:#808080"></div>
<div class="t" style="left:1.00px;top:65px;">ReturnType</div>
<div class="t" style="left:141.00px;top:65px;transform:scaleX(0.9474);transform-origin:0 0;">void</div>
<div style="left:0;top:80px;width:378px;height:15px;background:#ffff80"></div>
<div style="left:0;top:95px;width:379px;height:1px;background:#808080"></div>
<div class="t" style="left:0.00px;top:81px;transform:scaleX(0.9841);transform-origin:0 0;">Parameter-0:</div>
<div style="left:139px;top:0;width:1px;height:200px;background:#808080"></div>
<div style="left:378px;top:0;width:1px;height:200px;background:#808080"></div>
</div>
<div style="left:566px;top:237px;width:16px;height:56px;background:repeating-conic-gradient(#fff 0 25%,#d4d0c8 0 50%) 0 0/2px 2px;"></div>
<div style="left:566px;top:221px;width:16px;height:16px;background:#d4d0c8;box-shadow:inset -1px -1px #404040,inset 1px 1px #d4d0c8,inset -2px -2px #808080,inset 2px 2px #ffffff;"></div>
<div style="left:566px;top:293px;width:16px;height:16px;background:#d4d0c8;box-shadow:inset -1px -1px #404040,inset 1px 1px #d4d0c8,inset -2px -2px #808080,inset 2px 2px #ffffff;"></div>
<div style="left:566px;top:237px;width:16px;height:23px;background:#d4d0c8;box-shadow:inset -1px -1px #404040,inset 1px 1px #d4d0c8,inset -2px -2px #808080,inset 2px 2px #ffffff;"></div>
<svg style="left:570px;top:227px" width="7" height="4" shape-rendering="crispEdges"><path d="M3 0h1v1h1v1h1v1h1v1H0V3h1V2h1V1h1z" fill="#333"/></svg>
<svg style="left:570px;top:299px" width="7" height="4" shape-rendering="crispEdges"><path d="M0 0h7v1h-1v1h-1v1h-1v1h-1V3H2V2H1V1H0z" fill="#333"/></svg>
<div style="left:185px;top:337px;width:399px;height:111px;background:#fff;box-shadow:inset 1px 1px #808080, inset 2px 2px #404040"></div>
<div style="left:582px;top:337px;width:2px;height:111px;background:#ffffff;"></div>
<div style="left:185px;top:446px;width:399px;height:2px;background:#ffffff;"></div>
<div style="left:582px;top:337px;width:2px;height:1px;background:#808080;"></div>
<div style="left:187px;top:339px;width:140px;height:19px;background:#d4d0c8;box-shadow:inset -1px -1px #404040, inset 1px 1px #fff, inset -2px -2px #808080"></div>
<div style="left:327px;top:339px;width:239px;height:19px;background:#d4d0c8;box-shadow:inset -1px -1px #404040, inset 1px 1px #fff, inset -2px -2px #808080"></div>
<div style="left:566px;top:339px;width:16px;height:19px;background:#d4d0c8;"></div>
<div class="t" style="left:244.00px;top:342px;transform:scaleX(0.8929);transform-origin:0 0;">Name</div>
<div class="t" style="left:432.00px;top:342px;">Value</div>
<div style="left:187px;top:358px;width:379px;height:88px;overflow:hidden">
<div style="left:0;top:0px;width:378px;height:15px;background:#ffff80"></div>
<div style="left:0;top:15px;width:379px;height:1px;background:#808080"></div>
<div class="t" style="left:0.00px;top:1px;">Operation:</div>
<div style="left:0;top:16px;width:378px;height:15px;background:#fff"></div>
<div style="left:0;top:31px;width:379px;height:1px;background:#808080"></div>
<div class="t" style="left:0.00px;top:17px;">openType</div>
<div class="t" style="left:142.00px;top:17px;">javax.management.openmbean.SimpleType(n...</div>
<div style="left:0;top:32px;width:378px;height:15px;background:#fff"></div>
<div style="left:0;top:47px;width:379px;height:1px;background:#808080"></div>
<div class="t" style="left:0.00px;top:33px;">originalType</div>
<div class="t" style="left:141.00px;top:33px;transform:scaleX(0.9474);transform-origin:0 0;">void</div>
<div style="left:0;top:48px;width:378px;height:15px;background:#ffff80"></div>
<div style="left:0;top:63px;width:379px;height:1px;background:#808080"></div>
<div class="t" style="left:0.00px;top:49px;transform:scaleX(0.9841);transform-origin:0 0;">Parameter-0:</div>
<div style="left:0;top:64px;width:378px;height:15px;background:#fff"></div>
<div style="left:0;top:79px;width:379px;height:1px;background:#808080"></div>
<div class="t" style="left:0.00px;top:65px;">openType</div>
<div class="t" style="left:142.00px;top:65px;">javax.management.openmbean.SimpleType(n...</div>
<div style="left:0;top:80px;width:378px;height:15px;background:#fff"></div>
<div style="left:0;top:95px;width:379px;height:1px;background:#808080"></div>
<div class="t" style="left:0.00px;top:81px;">originalType</div>
<div class="t" style="left:142.00px;top:81px;">java.lang.String</div>
<div style="left:139px;top:0;width:1px;height:200px;background:#808080"></div>
<div style="left:378px;top:0;width:1px;height:200px;background:#808080"></div>
</div>
<div style="left:566px;top:374px;width:16px;height:56px;background:repeating-conic-gradient(#fff 0 25%,#d4d0c8 0 50%) 0 0/2px 2px;"></div>
<div style="left:566px;top:358px;width:16px;height:16px;background:#d4d0c8;box-shadow:inset -1px -1px #404040,inset 1px 1px #d4d0c8,inset -2px -2px #808080,inset 2px 2px #ffffff;"></div>
<div style="left:566px;top:430px;width:16px;height:16px;background:#d4d0c8;box-shadow:inset -1px -1px #404040,inset 1px 1px #d4d0c8,inset -2px -2px #808080,inset 2px 2px #ffffff;"></div>
<div style="left:566px;top:374px;width:16px;height:34px;background:#d4d0c8;box-shadow:inset -1px -1px #404040,inset 1px 1px #d4d0c8,inset -2px -2px #808080,inset 2px 2px #ffffff;"></div>
<svg style="left:570px;top:364px" width="7" height="4" shape-rendering="crispEdges"><path d="M3 0h1v1h1v1h1v1h1v1H0V3h1V2h1V1h1z" fill="#333"/></svg>
<svg style="left:570px;top:436px" width="7" height="4" shape-rendering="crispEdges"><path d="M0 0h7v1h-1v1h-1v1h-1v1h-1V3H2V2H1V1H0z" fill="#333"/></svg>
</body></html>
